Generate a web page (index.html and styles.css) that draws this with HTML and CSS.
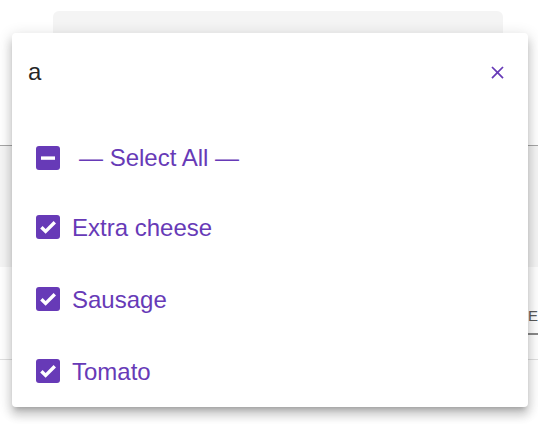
FILE: index.html
```html
<!DOCTYPE html>
<html>
<head>
<meta charset="utf-8">
<link rel="stylesheet" href="styles.css">
</head>
<body>
<div class="page">
  <div class="top">
    <div class="field"><span class="field-label">Toppings</span></div>
  </div>
  <div class="divider dark"></div>
  <div class="band"></div>
  <div class="row2"><span class="edge-text">E</span></div>
  <div class="divider light"></div>
</div>

<div class="panel">
  <div class="search">
    <span class="query">a</span>
    <svg class="close" viewBox="0 0 24 24" width="21" height="21"><path d="M19 6.41L17.59 5 12 10.59 6.41 5 5 6.41 10.59 12 5 17.59 6.41 19 12 13.41 17.59 19 19 17.59 13.41 12z" fill="#673ab7"/></svg>
  </div>
  <div class="option select-all">
    <span class="box"><svg viewBox="0 0 24 24" width="24" height="24"><rect x="5" y="10.4" width="14" height="3.4" fill="#fff"/></svg></span>
    <span class="label all">— Select All —</span>
  </div>
  <div class="option">
    <span class="box"><svg viewBox="0 0 24 24" width="24" height="24"><path d="M5.4 12.2l4.2 4.2L18.8 7.2" fill="none" stroke="#fff" stroke-width="3.4"/></svg></span>
    <span class="label">Extra cheese</span>
  </div>
  <div class="option">
    <span class="box"><svg viewBox="0 0 24 24" width="24" height="24"><path d="M5.4 12.2l4.2 4.2L18.8 7.2" fill="none" stroke="#fff" stroke-width="3.4"/></svg></span>
    <span class="label">Sausage</span>
  </div>
  <div class="option">
    <span class="box"><svg viewBox="0 0 24 24" width="24" height="24"><path d="M5.4 12.2l4.2 4.2L18.8 7.2" fill="none" stroke="#fff" stroke-width="3.4"/></svg></span>
    <span class="label">Tomato</span>
  </div>
</div>
</body>
</html>
```

FILE: styles.css
```css
html, body {
  margin: 0;
  padding: 0;
  background: #fff;
  overflow: hidden;
  font-family: "Liberation Sans", Arial, sans-serif;
}

.page {
  width: 538px;
  height: 424px;
  position: relative;
}

.top {
  height: 145px;
  padding-top: 11px;
  box-sizing: border-box;
}

.field {
  margin-left: 53px;
  width: 450px;
  height: 134px;
  background: #f4f4f4;
  border-radius: 6px 6px 0 0;
  box-sizing: border-box;
  padding: 20px 0 0 19px;
}

.field-label {
  display: block;
  font-size: 18px;
  line-height: 18px;
  color: #8e6bcc;
}

.divider {
  height: 1px;
}
.divider.dark { background: #a6a6a6; }
.divider.light { background: #e0e0e0; }

.band {
  height: 121px;
  background: #f5f5f5;
}

.row2 {
  height: 92px;
  box-sizing: border-box;
  padding: 40px 0 0 528px;
  white-space: nowrap;
}

.edge-text {
  display: inline-block;
  width: 10px;
  font-size: 15px;
  line-height: 18px;
  color: #5a5a5a;
  padding-bottom: 8px;
  border-bottom: 2px solid #8a8a8a;
}

.panel {
  position: absolute;
  left: 12px;
  top: 33px;
  width: 516px;
  height: 374px;
  background: #fff;
  border-radius: 4px;
  box-shadow: 0 5px 5px -3px rgba(0,0,0,.2), 0 8px 10px 1px rgba(0,0,0,.14), 0 3px 14px 2px rgba(0,0,0,.12);
  overflow: hidden;
}

.search {
  height: 89px;
  box-sizing: border-box;
  padding: 27px 20px 0 16px;
  display: flex;
  align-items: flex-start;
  justify-content: space-between;
}

.query {
  font-size: 24px;
  line-height: 24px;
  color: rgba(0,0,0,.87);
}

.close {
  display: block;
  margin-top: 2px;
}

.option {
  height: 72px;
  box-sizing: border-box;
  padding-left: 24px;
  display: flex;
  align-items: center;
  gap: 12px;
}

.option.select-all {
  height: 69px;
  padding-top: 3px;
}

.box {
  width: 24px;
  height: 24px;
  border-radius: 3px;
  background: #673ab7;
  display: block;
  flex: none;
}

.box svg { display: block; }

.label {
  font-size: 24px;
  line-height: 24px;
  padding-top: 2px;
  color: #673ab7;
}

.label.all {
  padding-top: 0;
  padding-left: 7px;
}
```
